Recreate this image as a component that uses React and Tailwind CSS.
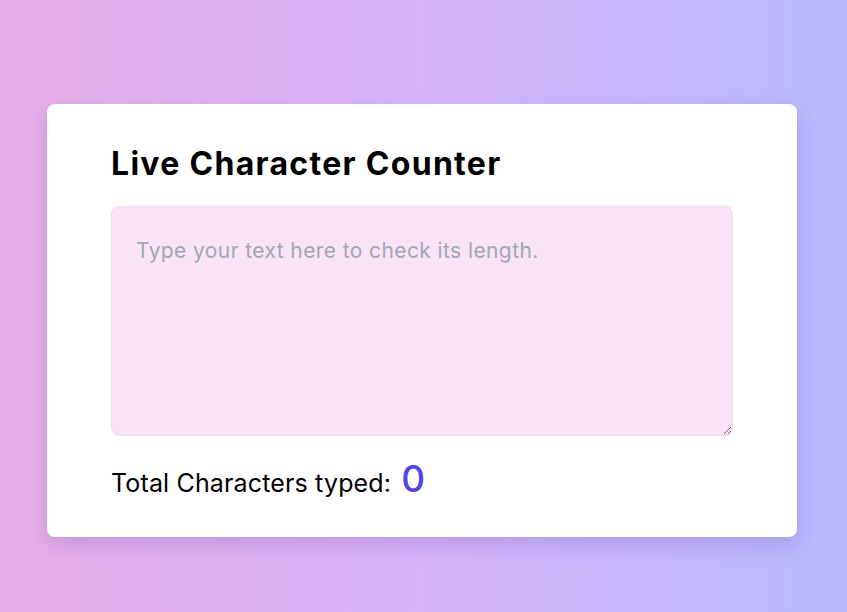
import React, { useState } from 'react';

const CharacterCounter = () => {
  const [text, setText] = useState('');

  return (
    <div className="w-[750px] rounded-lg bg-white px-16 pt-[40px] pb-[38px] shadow-[0_8px_20px_rgba(80,40,140,0.18)]">
      <h1 className="text-[32px] font-bold leading-[40px] text-black tracking-[1.3px]">
        Live Character Counter
      </h1>

      <textarea
        value={text}
        onChange={(e) => setText(e.target.value)}
        placeholder="Type your text here to check its length."
        className="mt-[22px] block h-[230px] w-full rounded-lg border border-[#eddcec] bg-[#f8e4f6] px-6 pt-[30px] pb-[26px] text-[21px] leading-[28px] tracking-[0.4px] text-gray-800 outline-none placeholder:text-[#a3a6b2]"
      />

      {/* Counter */}
      <p className="mt-[27px] flex items-baseline gap-[10px] text-[25px] leading-[32px] tracking-[0.15px] text-black">
        Total Characters typed:
        <span className="text-[37px] leading-[32px] font-medium text-[#4f46e5]">{text.length}</span>
      </p>
    </div>
  );
};

export default function App() {
  return (
    <div
      className="flex min-h-[612px] w-full items-start justify-center bg-gradient-to-r from-[#e6aee6] via-[#d6b3fb] to-[#b7b9fc] pt-[104px] pr-[3px]"
      style={{ fontFamily: 'Inter, "Noto Sans", sans-serif' }}
    >
      <CharacterCounter />
    </div>
  );
}
